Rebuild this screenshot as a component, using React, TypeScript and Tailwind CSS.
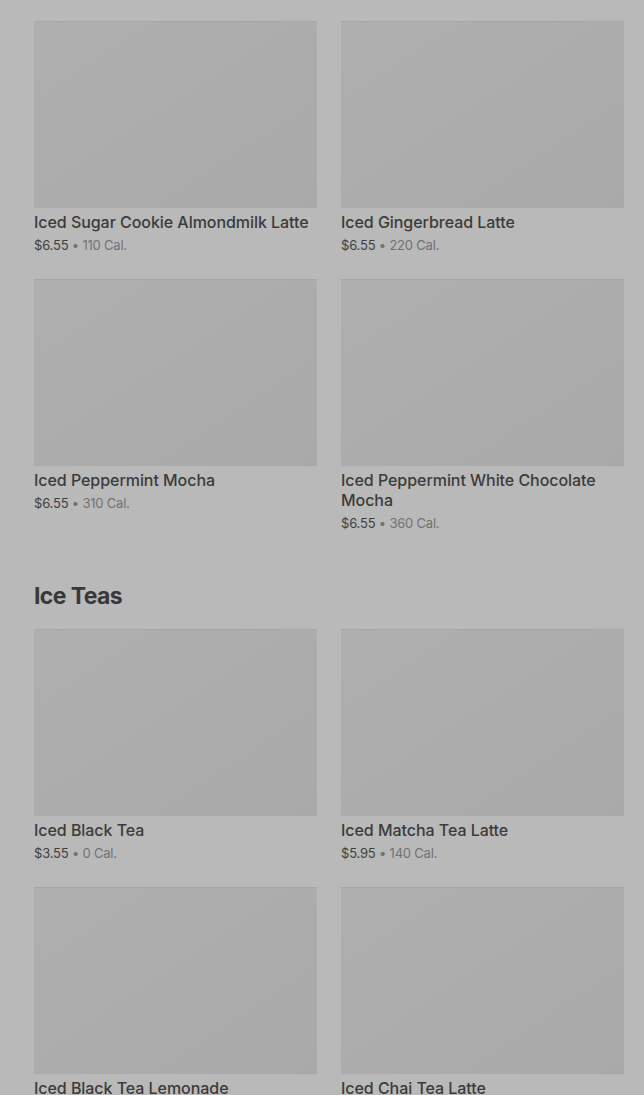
type Item = { name: string; price: string; cal: string };

const drinks: Item[] = [
  { name: "Iced Sugar Cookie Almondmilk Latte", price: "$6.55", cal: "110 Cal." },
  { name: "Iced Gingerbread Latte", price: "$6.55", cal: "220 Cal." },
  { name: "Iced Peppermint Mocha", price: "$6.55", cal: "310 Cal." },
  { name: "Iced Peppermint White Chocolate Mocha", price: "$6.55", cal: "360 Cal." },
];

const teas: Item[] = [
  { name: "Iced Black Tea", price: "$3.55", cal: "0 Cal." },
  { name: "Iced Matcha Tea Latte", price: "$5.95", cal: "140 Cal." },
  { name: "Iced Black Tea Lemonade", price: "$3.75", cal: "70 Cal." },
  { name: "Iced Chai Tea Latte", price: "$5.45", cal: "240 Cal." },
];

function Card({ item }: { item: Item }) {
  return (
    <div className="flex flex-col">
      <div className="h-[187px] w-full bg-[#ababab] bg-gradient-to-br from-[#afafaf] to-[#a9a9a9] border-t border-[#a6a6a6]" />
      <h3 className="mt-[4px] text-[16px] leading-[20px] font-medium text-[#3b3b3b] tracking-[-0.05px]">
        {item.name}
      </h3>
      <p className="mt-[4px] text-[13px] leading-[18px] text-[#3f3f3f] tracking-[-0.2px]">
        {item.price}
        <span className="text-[#727272]"> • {item.cal}</span>
      </p>
    </div>
  );
}

function Grid({ items }: { items: Item[] }) {
  return (
    <div className="grid grid-cols-2 gap-x-[24px] gap-y-[25px]">
      {items.map((item, i) => (
        <Card key={i} item={item} />
      ))}
    </div>
  );
}

export default function App() {
  return (
    <div
      className="min-h-screen bg-[#b9b9b9] pl-[34px] pr-[20px] pt-[21px] pb-10"
      style={{ fontFamily: "Inter, 'Noto Sans', sans-serif" }}
    >
      <Grid items={drinks} />
      <h2 className="mt-[48px] mb-[17px] text-[23px] leading-[32px] font-bold tracking-[-0.6px] text-[#383838]">
        Ice Teas
      </h2>
      <Grid items={teas} />
    </div>
  );
}
